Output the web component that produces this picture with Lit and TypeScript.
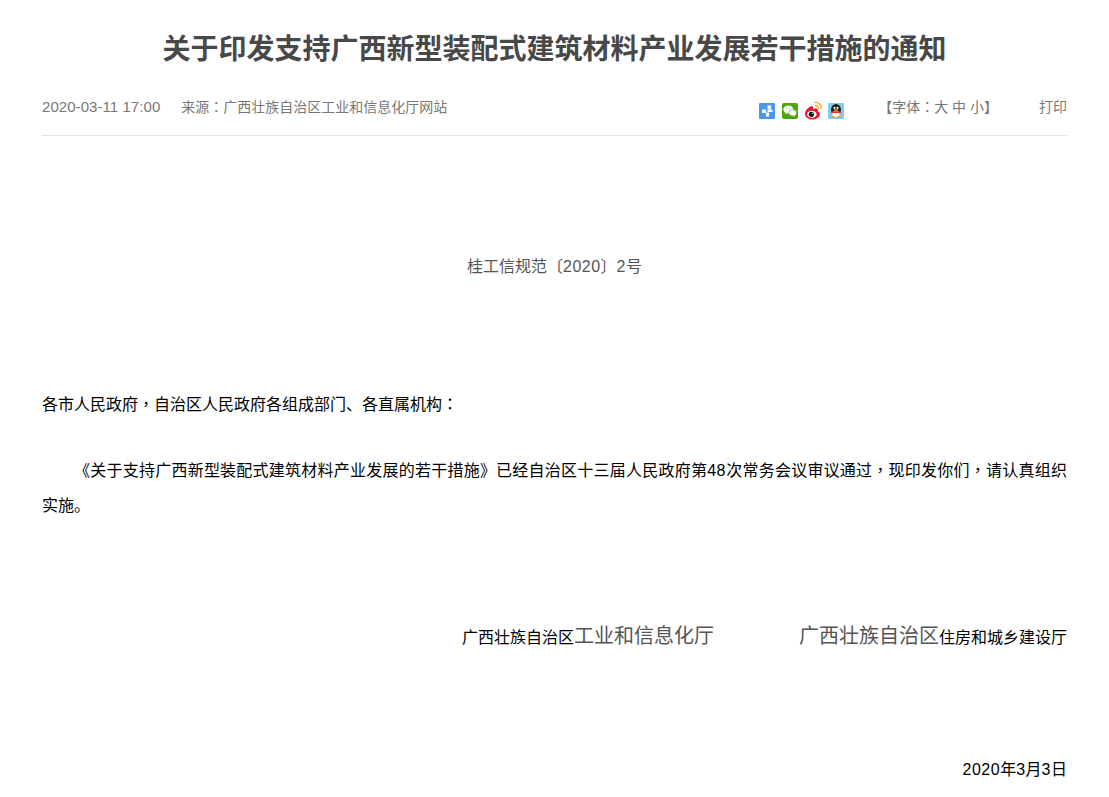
import { LitElement, html, css } from "lit";
import { customElement } from "lit/decorators.js";

@customElement("app-root")
export class AppRoot extends LitElement {
  static styles = css`
    :host {
      display: block;
      font-family: "Liberation Sans", "Noto Sans CJK SC", sans-serif;
      color: #555;
      background: #fff;
      height: 797px;
      overflow: hidden;
    }
    .page { padding: 0 42px; }
    h1 {
      margin: 0;
      padding-top: 29px;
      height: 46px;
      line-height: 42px;
      font-size: 28px;
      font-weight: 700;
      text-align: center;
      color: #484848;
    }
    .meta {
      height: 58px;
      padding-top: 2px;
      border-bottom: 1px solid #e3e3e3;
      display: flex;
      align-items: center;
      font-size: 14px;
      color: #777;
    }
    .date { margin-right: 21px; font-size: 15px; letter-spacing: 0.06px; }
    .share { margin-left: auto; display: flex; gap: 7px; margin-right: 34px; padding-top: 10px; }
    .share svg { display: block; width: 16px; height: 16px; overflow: visible; }
    .font { margin-right: 41px; }
    .p { font-family: "Noto Sans CJK TC", sans-serif; line-height: 0; }
    .n { letter-spacing: 0.5px; }
    .doc-no { margin-top: 115px; text-align: center; font-size: 16px; line-height: 32px; color: #555; }
    .body { font-size: 16px; line-height: 35px; color: #000; }
    .greet { margin-top: 104px; }
    .para { margin-top: 31px; text-indent: 2em; text-align: justify; }
    .sign { margin-top: 93px; display: flex; justify-content: flex-end; align-items: baseline; gap: 85px; line-height: 40px; }
    .big { font-size: 20px; color: #555; }
    .when { margin-top: 94px; text-align: right; line-height: 36px; }
  `;

  render() {
    return html`<div class="page">
      <h1>关于印发支持广西新型装配式建筑材料产业发展若干措施的通知</h1>
      <div class="meta">
        <span class="date">2020-03-11 17:00</span>
        <span>来源<span class="p">：</span>广西壮族自治区工业和信息化厅网站</span>
        <div class="share">
          <svg viewBox="0 0 16 16"><rect width="16" height="16" rx="1" fill="#4a97ee"/><path d="M8.500 2.500H12V6H8.500zM3 6.500h4V10H3zM8.500 6.500h5V9h-5zM7 9.500h3V13.500H7z" fill="#fff"/></svg>
          <svg viewBox="0 0 16 16"><rect width="16" height="16" rx="2" fill="#4da50f"/><ellipse cx="6.300" cy="6.500" rx="5" ry="4" fill="#fff"/><path d="M3.500 9l-.5 2 2.500-1.300z" fill="#fff"/><ellipse cx="10.800" cy="9.800" rx="3.900" ry="3.200" fill="#fff" stroke="#4da50f" stroke-width=".6"/><path d="M12.500 12l.7 1.500-2.200-1z" fill="#fff"/><circle cx="4.800" cy="5" r=".6" fill="#4da50f"/><circle cx="7.800" cy="5" r=".6" fill="#4da50f"/></svg>
          <svg viewBox="0 0 16 16"><path d="M6.500 3C3 4.500 0 7.500 0 11c0 3 3.500 5.500 7 5.500 4.500 0 8-2.500 8-5.300 0-1.700-1.300-2.400-2.300-2.700.6-1.700 0-3-1.700-3-1 0-2.200.5-2.800.8.200-1.800-.4-3.800-1.700-3.300z" fill="#e6162d"/><ellipse cx="6.800" cy="11.300" rx="4.800" ry="3.600" fill="#fff"/><circle cx="6.400" cy="11.300" r="2.600" fill="#111"/><circle cx="7.200" cy="10.600" r=".7" fill="#fff"/><path d="M10 -.5c3.500-.3 6.500 2.500 6 6M10.500 2.500c1.800-.2 3.300 1.200 3 3" fill="none" stroke="#f5a623" stroke-width="1.300" stroke-linecap="round"/></svg>
          <svg viewBox="0 0 16 16"><rect width="16" height="16" rx="1" fill="#86c8f0"/><ellipse cx="8" cy="7" rx="5" ry="6" fill="#1b1b1b"/><ellipse cx="8" cy="11" rx="3.800" ry="3" fill="#fff"/><circle cx="6.500" cy="4.800" r="1.100" fill="#fff"/><circle cx="9.500" cy="4.800" r="1.100" fill="#fff"/><path d="M5.500 6.300h5l-1 1.400H6.500z" fill="#f5a01e"/><path d="M3.500 8.300h9l-.5 1.600H4z" fill="#e33"/><path d="M2.500 15h4.500v-1.500l-3.500-.7zM13.500 15H9v-1.500l3.500-.7z" fill="#f5a01e"/></svg>
        </div>
        <span class="font">【字体<span class="p">：</span>大 中 小】</span>
        <span>打印</span>
      </div>
      <div class="doc-no">桂工信规范〔<span class="n">2020</span>〕<span class="n">2</span>号</div>
      <div class="body">
        <div class="greet">各市人民政府<span class="p">，</span>自治区人民政府各组成部门、各直属机构<span class="p">：</span></div>
        <div class="para">《关于支持广西新型装配式建筑材料产业发展的若干措施》已经自治区十三届人民政府第<span class="n">48</span>次常务会议审议通过<span class="p">，</span>现印发你们<span class="p">，</span>请认真组织<wbr>实施。</div>
        <div class="sign">
          <span>广西壮族自治区<span class="big">工业和信息化厅</span></span>
          <span><span class="big">广西壮族自治区</span>住房和城乡建设厅</span>
        </div>
        <div class="when"><span class="n">2020</span>年<span class="n">3</span>月<span class="n">3</span>日</div>
      </div>
    </div>`;
  }
}
